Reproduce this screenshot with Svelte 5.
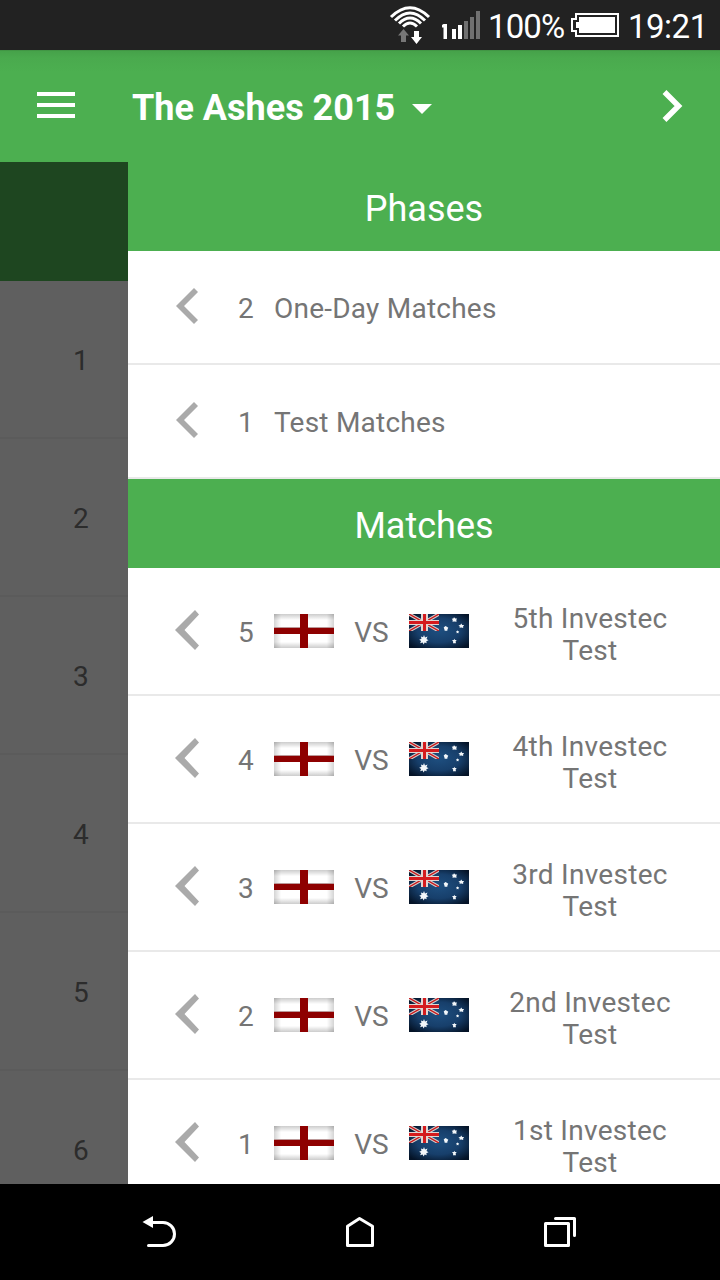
<script>
  const phases = [
    { n: 2, name: 'One-Day Matches' },
    { n: 1, name: 'Test Matches' }
  ];
  const matches = [
    { n: 5, ord: '5th' },
    { n: 4, ord: '4th' },
    { n: 3, ord: '3rd' },
    { n: 2, ord: '2nd' },
    { n: 1, ord: '1st' }
  ];
  const positions = [1, 2, 3, 4, 5, 6];
</script>

{#snippet england()}
  <svg class="flag" width="60" height="34" viewBox="0 0 60 34">
    <defs>
      <linearGradient id="ex"><stop offset="0" stop-color="#000" stop-opacity=".17" /><stop offset=".12" stop-color="#000" stop-opacity="0" /><stop offset=".88" stop-color="#000" stop-opacity="0" /><stop offset="1" stop-color="#000" stop-opacity=".17" /></linearGradient>
      <linearGradient id="ey" x2="0" y2="1"><stop offset="0" stop-color="#000" stop-opacity=".2" /><stop offset=".18" stop-color="#000" stop-opacity="0" /><stop offset=".82" stop-color="#000" stop-opacity="0" /><stop offset="1" stop-color="#000" stop-opacity=".2" /></linearGradient>
    </defs>
    <path fill="#fff" d="M0 0h60v34H0z" />
    <path fill="url(#ex)" d="M0 0h60v34H0z" />
    <path fill="url(#ey)" d="M0 0h60v34H0z" />
    <path fill="#b99" d="M0 13h60v1H0z" />
    <path fill="#8e0000" d="M26 0h8v14h26v6H34v14h-8V20H0v-6h26z" />
  </svg>
{/snippet}

{#snippet australia()}
  <svg class="flag" width="60" height="34" viewBox="0 0 60 34">
    <defs>
      <radialGradient id="au" cx=".5" cy=".48" r=".65"><stop offset="0" stop-color="#1e4f80" /><stop offset=".55" stop-color="#173f6b" /><stop offset="1" stop-color="#041327" /></radialGradient>
      <clipPath id="jack"><path d="M0 0h30v17H0z" /></clipPath>
    </defs>
    <path fill="url(#au)" d="M0 0h60v34H0z" />
    <g clip-path="url(#jack)">
      <path stroke="#d8d0cd" stroke-width="3.400" d="M0 0l30 17M30 0L0 17" />
      <path stroke="#c8181b" stroke-width="1.400" d="M0 0l30 17M30 0L0 17" />
      <path fill="#e0d6d2" d="M12 0h7v6h11v5H19v6h-7v-6H0V6h12z" />
      <path fill="#d41b1e" d="M14 0h3v7h13v3H17v7h-3v-7H0V7h14z" />
    </g>
    <g fill="#f3f7fa">
      <path d="M15 21l1 2.400 2.500-.8-1 2.300 2 1.300-2.200 1 .4 2.100-2-.7-1.100 1.900-.9-2-2.600.8 1-2.300-1.900-1.300 2.300-1-.6-2.200 2.200.8z" />
      <path d="M45 3.200l1.300 1.200h1.700l-.7 1.700.3 1.700-2.400-.4-1.700.4.200-1.700-1-1.400 1.600-.2zM52.200 9.500l1 1.400h1.900l-1 1.600.1 1.500-1.800-.5-1.800.3v-1.500l-1.200-1.100 1.900-.3zM36.500 12l1.300.8 1.500 1-.8 1.400-.2 1.500h-2.600l-.4-1.600-.6-1.700zM45.200 24.800l.8 1.300h1.700l-1.100 1.500.4 1.700h-3l.2-1.600-1.100-1.600 1.700-.2zM48.500 16.200l.6 1h1.100l-.7 1 .1 1.100-1-.3-1.100.3.200-1.100-.8-.9 1.100-.1z" />
    </g>
  </svg>
{/snippet}

<div class="screen">
  <div class="status">
    <svg width="92" height="50" viewBox="388 0 92 50">
      <g fill="none" stroke="#fff" stroke-width="3">
        <path d="M391 17Q410 -1.500 429 17" />
        <path d="M395 20.500Q410 5.500 425 20.500" />
        <path d="M399 23.500Q410 12.500 421 23.500" />
        <path d="M403 26.500Q410 19.500 417 26.500" />
      </g>
      <path fill="#777" d="M403.500 29l5.500 6.500h-3V42h-5v-6.500h-3z" />
      <path fill="#fff" d="M414 31h5v6h3l-5.500 7-5.500-7h3z" />
      <path fill="#fff" d="M443.500 24h3.500v15h-3.500V27.500H442V25zM452 29h4v10h-4zM458 25h4v14h-4z" />
      <path fill="#707070" d="M464 21h4v18h-4zM470 17h4v22h-4zM476 11h4v28h-4z" />
    </svg>
    <span class="pct">100%</span>
    <svg class="battery" width="48" height="26" viewBox="571 12 48 26">
      <path fill="none" stroke="#fff" stroke-width="2" d="M576 14h42v22h-42v-5h-4V19h4z" />
      <path fill="#fff" d="M579 17h36v16h-36v-5h-3v-6h3z" />
    </svg>
    <span class="time">19:21</span>
  </div>

  <header class="bar">
    <svg width="38" height="26" viewBox="0 0 38 26"><path fill="#fff" d="M0 0h38v4H0zM0 11h38v4H0zM0 22h38v4H0z" /></svg>
    <h1>The Ashes 2015</h1>
    <svg class="caret" width="20" height="10" viewBox="0 0 20 10"><path fill="#fff" d="M0 0h20L10 10z" /></svg>
    <svg class="next" width="22" height="34" viewBox="0 0 22 34"><path fill="none" stroke="#fff" stroke-width="5.500" d="M2.500 3L16.500 17 2.500 31" /></svg>
  </header>

  <div class="content">
    <aside>
      <div class="cover"></div>
      {#each positions as p}
        <div class="pos">{p}</div>
      {/each}
    </aside>
    <main>
      <h2>Phases</h2>
      {#each phases as p}
        <div class="row phase">
          <svg class="chev" width="22" height="36" viewBox="0 0 22 36"><path fill="#aaa" d="M18 0l4 4L8 18l14 14-4 4L0 18z" /></svg>
          <span class="num">{p.n}</span>
          <span class="name">{p.name}</span>
        </div>
      {/each}
      <h2>Matches</h2>
      {#each matches as m}
        <div class="row match">
          <svg class="chev" width="24" height="40" viewBox="0 0 24 40"><path fill="#aaa" d="M20 0l4 4.500L9.500 20 24 35.500 20 40 0 20z" /></svg>
          <span class="num">{m.n}</span>
          {@render england()}
          <span class="vs">VS</span>
          {@render australia()}
          <span class="title">{m.ord} Investec<br />Test</span>
        </div>
      {/each}
    </main>
  </div>

  <nav>
    <svg width="36" height="34" viewBox="142 1215 36 34">
      <path fill="none" stroke="#fff" stroke-width="3" stroke-linecap="round" d="M151 1222.500h12a11.500 11.500 0 0 1 0 23H148.500" />
      <path fill="#fff" d="M142.500 1222l10.500-6v12z" />
    </svg>
    <svg width="36" height="34" viewBox="342 1215 36 34">
      <path fill="none" stroke="#fff" stroke-width="3" stroke-linejoin="round" d="M347.500 1245.500v-19.300l12-7.700 13 7.700v19.300z" />
    </svg>
    <svg width="36" height="34" viewBox="542 1215 36 34">
      <path fill="none" stroke="#fff" stroke-width="3" stroke-linejoin="round" d="M545.500 1223.500h23v22h-23z" />
      <path fill="none" stroke="#fff" stroke-width="3" stroke-linecap="round" stroke-linejoin="round" d="M555.500 1218.500h19v17" />
    </svg>
  </nav>
</div>

<style>
  .screen {
    width: 720px;
    height: 1280px;
    display: flex;
    flex-direction: column;
    overflow: hidden;
    background: #fff;
    font-family: Roboto, sans-serif;
    color: #757575;
  }
  svg { display: block; flex: none; }
  .status {
    height: 50px;
    flex: none;
    display: flex;
    align-items: center;
    padding-left: 388px;
    background: #222;
    color: #fff;
    font-size: 33px;
    line-height: 40px;
    white-space: nowrap;
  }
  .pct { width: 83px; padding: 3px 0 0 8px; letter-spacing: -0.9px; }
  .time { padding: 3px 0 0 9px; letter-spacing: -0.5px; }
  .bar {
    height: 112px;
    flex: none;
    box-sizing: border-box;
    display: flex;
    align-items: center;
    padding: 0 36px 2px 37px;
    background: linear-gradient(#3c8a3f 0, #46a24a 1px, #4aaa4e 8px, #4caf50 22px);
  }
  h1 {
    width: 280px;
    margin: 6px 0 0 57px;
    font-size: 36px;
    line-height: 44px;
    font-weight: 700;
    color: #fff;
    white-space: nowrap;
  }
  .caret { margin-top: 8px; }
  .next { margin-left: auto; margin-top: 1px; }
  .content { height: 1022px; flex: none; display: flex; overflow: hidden; }
  aside { width: 128px; background: #5f5f5f; }
  .cover { height: 119px; background: #1e4620; }
  .pos {
    height: 158px;
    box-sizing: border-box;
    border-bottom: 2px solid #5b5b5b;
    padding-left: 73px;
    font-size: 28px;
    line-height: 160px;
    color: #2c2c2c;
  }
  main { width: 592px; }
  h2 {
    height: 89px;
    margin: 0;
    background: #4caf50;
    color: #fff;
    font-size: 36px;
    line-height: 95px;
    font-weight: 400;
    text-align: center;
  }
  .row {
    display: flex;
    align-items: center;
    box-sizing: border-box;
    border-bottom: 2px solid #e9e9e9;
    font-size: 28px;
    line-height: 32px;
    white-space: nowrap;
  }
  .phase { height: 114px; padding-left: 48px; }
  .match { height: 128px; padding-left: 47px; }
  .chev { margin-top: -2px; }
  .num { width: 36px; margin-left: 40px; padding-top: 4px; }
  .match .num { margin-left: 39px; }
  .name { padding-top: 4px; letter-spacing: 0.23px; }
  .vs { width: 75px; text-align: center; padding-top: 4px; }
  .title { width: 242px; text-align: center; padding-top: 8px; letter-spacing: 0.28px; }
  nav {
    height: 96px;
    flex: none;
    box-sizing: border-box;
    padding: 0 142px;
    display: flex;
    align-items: center;
    justify-content: space-between;
    background: #000;
  }
</style>
